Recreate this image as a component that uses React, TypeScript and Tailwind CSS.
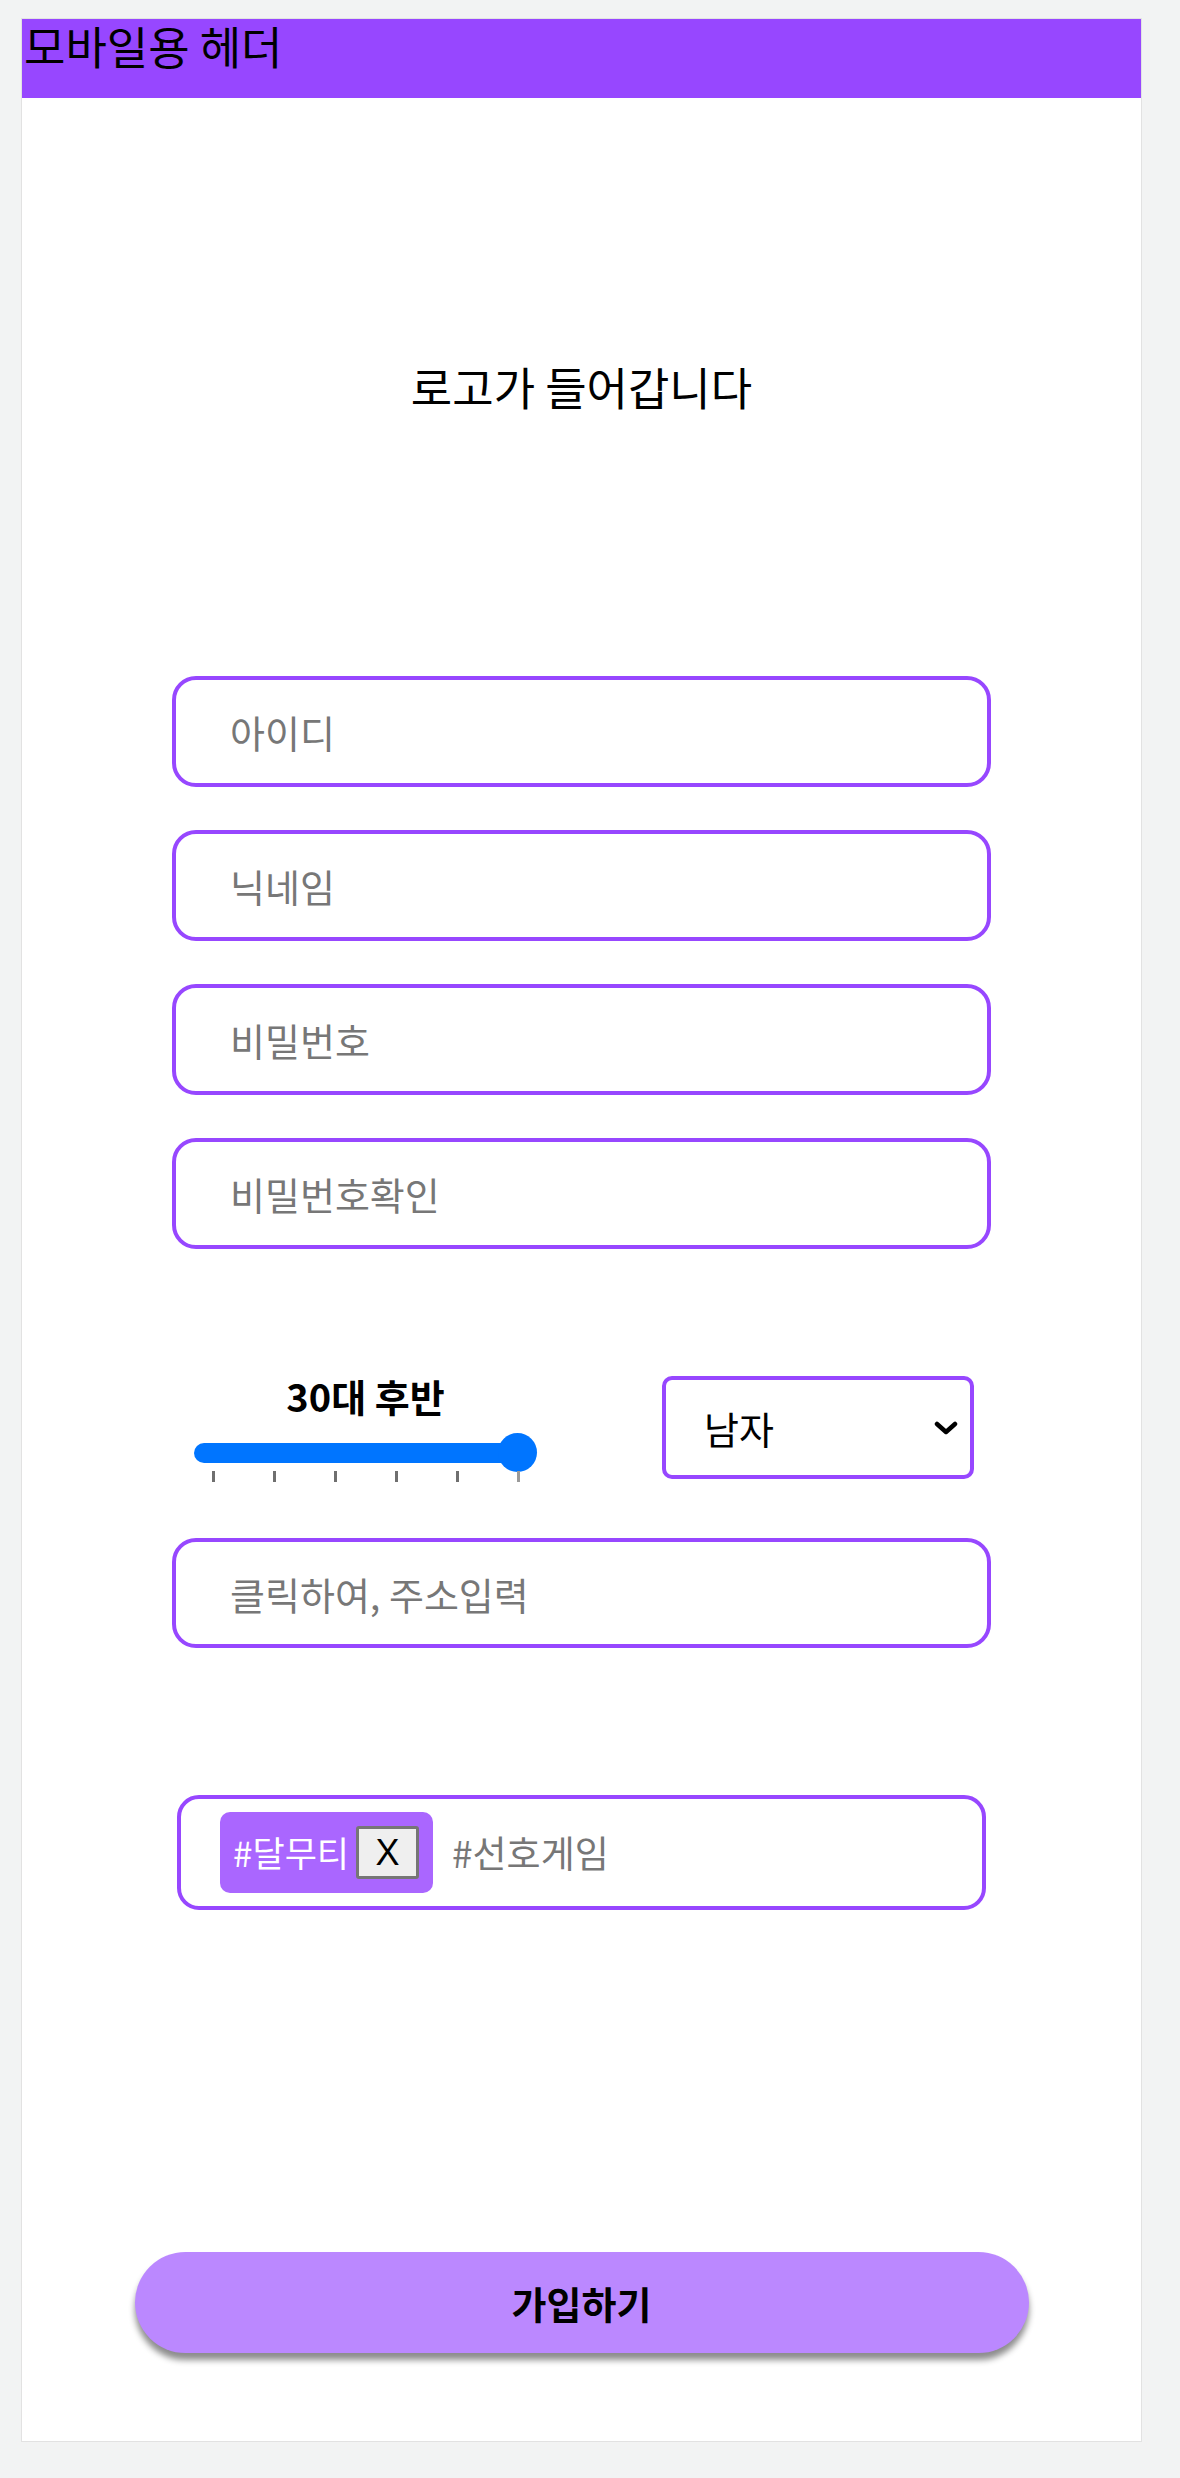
import React, { useState } from "react";

const font = { fontFamily: '"Noto Sans CJK KR", "Noto Sans", sans-serif' };

const fields = ["아이디", "닉네임", "비밀번호", "비밀번호확인"];

// slider tick positions (px from slider left)
const ticks = [18, 79, 140, 201, 262, 323];

const AgeSlider = () => {
  return (
    <div className="flex flex-col items-center w-[343px]">
      <div className="text-[38px] font-semibold leading-[46px] text-black">30대 후반</div>
      <div className="relative mt-[14px] w-[343px] h-[46px]">
        <div className="absolute left-0 top-[10px] h-[20px] w-[334px] rounded-full bg-[#0075ff]" />
        <div className="absolute right-0 top-[0px] h-[39px] w-[39px] rounded-full bg-[#0075ff]" />
        {ticks.map((t, i) => (
          <div
            key={i}
            className={`absolute top-[38px] h-[11px] w-[3px] ${i === 5 ? "bg-[#9a9a9a]" : "bg-[#6f6f6f]"}`}
            style={{ left: t }}
          />
        ))}
      </div>
    </div>
  );
};

const GenderSelect = () => {
  const [gender, setGender] = useState("남자");
  return (
    <div className="relative w-[312px] h-[103px]">
      <select
        value={gender}
        onChange={(e) => setGender(e.target.value)}
        className="appearance-none w-full h-full border-4 border-[#9747ff] rounded-[10px] bg-white pl-[38px] text-[38px] text-black outline-none"
        style={font}
      >
        <option>남자</option>
        <option>여자</option>
      </select>
      <svg
        className="pointer-events-none absolute right-[16px] top-[45px]"
        width="24"
        height="14"
        viewBox="0 0 24 14"
      >
        <path d="M3 3 L12 11 L21 3" fill="none" stroke="#000" strokeWidth="4.5" strokeLinecap="round" strokeLinejoin="round" />
      </svg>
    </div>
  );
};

export default function App() {
  const [tags, setTags] = useState(["#달무티"]);

  return (
    <div className="min-h-[2478px] bg-[#f2f3f3] pt-[18px]" style={font}>
      <div className="ml-[21px] w-[1121px] min-h-[2424px] bg-white border border-[#e2e2e2] flex flex-col items-center pb-[86px]">
        {/* 모바일 헤더 */}
        <header className="w-full h-[79px] bg-[#9747ff]">
          <div className="text-[45px] leading-[54px] text-black pl-[2px]">모바일용 헤더</div>
        </header>

        {/* 로고 영역 */}
        <div className="h-[578px] flex items-center justify-center">
          <div className="text-[45px] text-black">로고가 들어갑니다</div>
        </div>

        <div className="flex flex-col gap-[43px]">
          {fields.map((f) => (
            <input
              key={f}
              type={f.startsWith("비밀번호") ? "password" : "text"}
              placeholder={f}
              className="w-[819px] h-[111px] border-4 border-[#9747ff] rounded-[24px] px-[54px] text-[38px] outline-none placeholder:text-[#777]"
              style={font}
            />
          ))}
        </div>

        <div className="w-[819px] flex items-start justify-between pl-[22px] pr-[17px] mt-[124px]">
          <AgeSlider />
          <div className="pt-[3px]">
            <GenderSelect />
          </div>
        </div>

        <input
          type="text"
          placeholder="클릭하여, 주소입력"
          readOnly
          className="mt-[59px] w-[819px] h-[110px] border-4 border-[#9747ff] rounded-[24px] px-[54px] text-[38px] outline-none placeholder:text-[#777]"
          style={font}
        />

        {/* 선호게임 태그 */}
        <div className="mt-[147px] w-[809px] h-[115px] border-4 border-[#9747ff] rounded-[22px] flex items-center pl-[39px] gap-[19px]">
          {tags.map((t) => (
            <div key={t} className="h-[81px] rounded-[10px] bg-[#aa66ff] flex items-center pl-[13px] pr-[14px] gap-[7px]">
              <span className="text-[35px] text-white">{t}</span>
              <button
                onClick={() => setTags(tags.filter((x) => x !== t))}
                className="w-[63px] h-[53px] bg-[#efefef] border-[3px] border-[#767676] rounded-[3px] text-[36px] text-black leading-none flex items-center justify-center"
                style={{ fontFamily: '"Liberation Sans", Arial, sans-serif' }}
              >
                X
              </button>
            </div>
          ))}
          <input
            type="text"
            placeholder="#선호게임"
            className="flex-1 text-[37px] outline-none placeholder:text-[#777]"
            style={font}
          />
        </div>

        <button
          className="mt-[342px] w-[894px] h-[101px] rounded-full bg-[#bb88ff] text-[38px] font-semibold text-black shadow-[0_7px_6px_rgba(0,0,0,0.45)]"
          style={font}
        >
          가입하기
        </button>
      </div>
    </div>
  );
}
